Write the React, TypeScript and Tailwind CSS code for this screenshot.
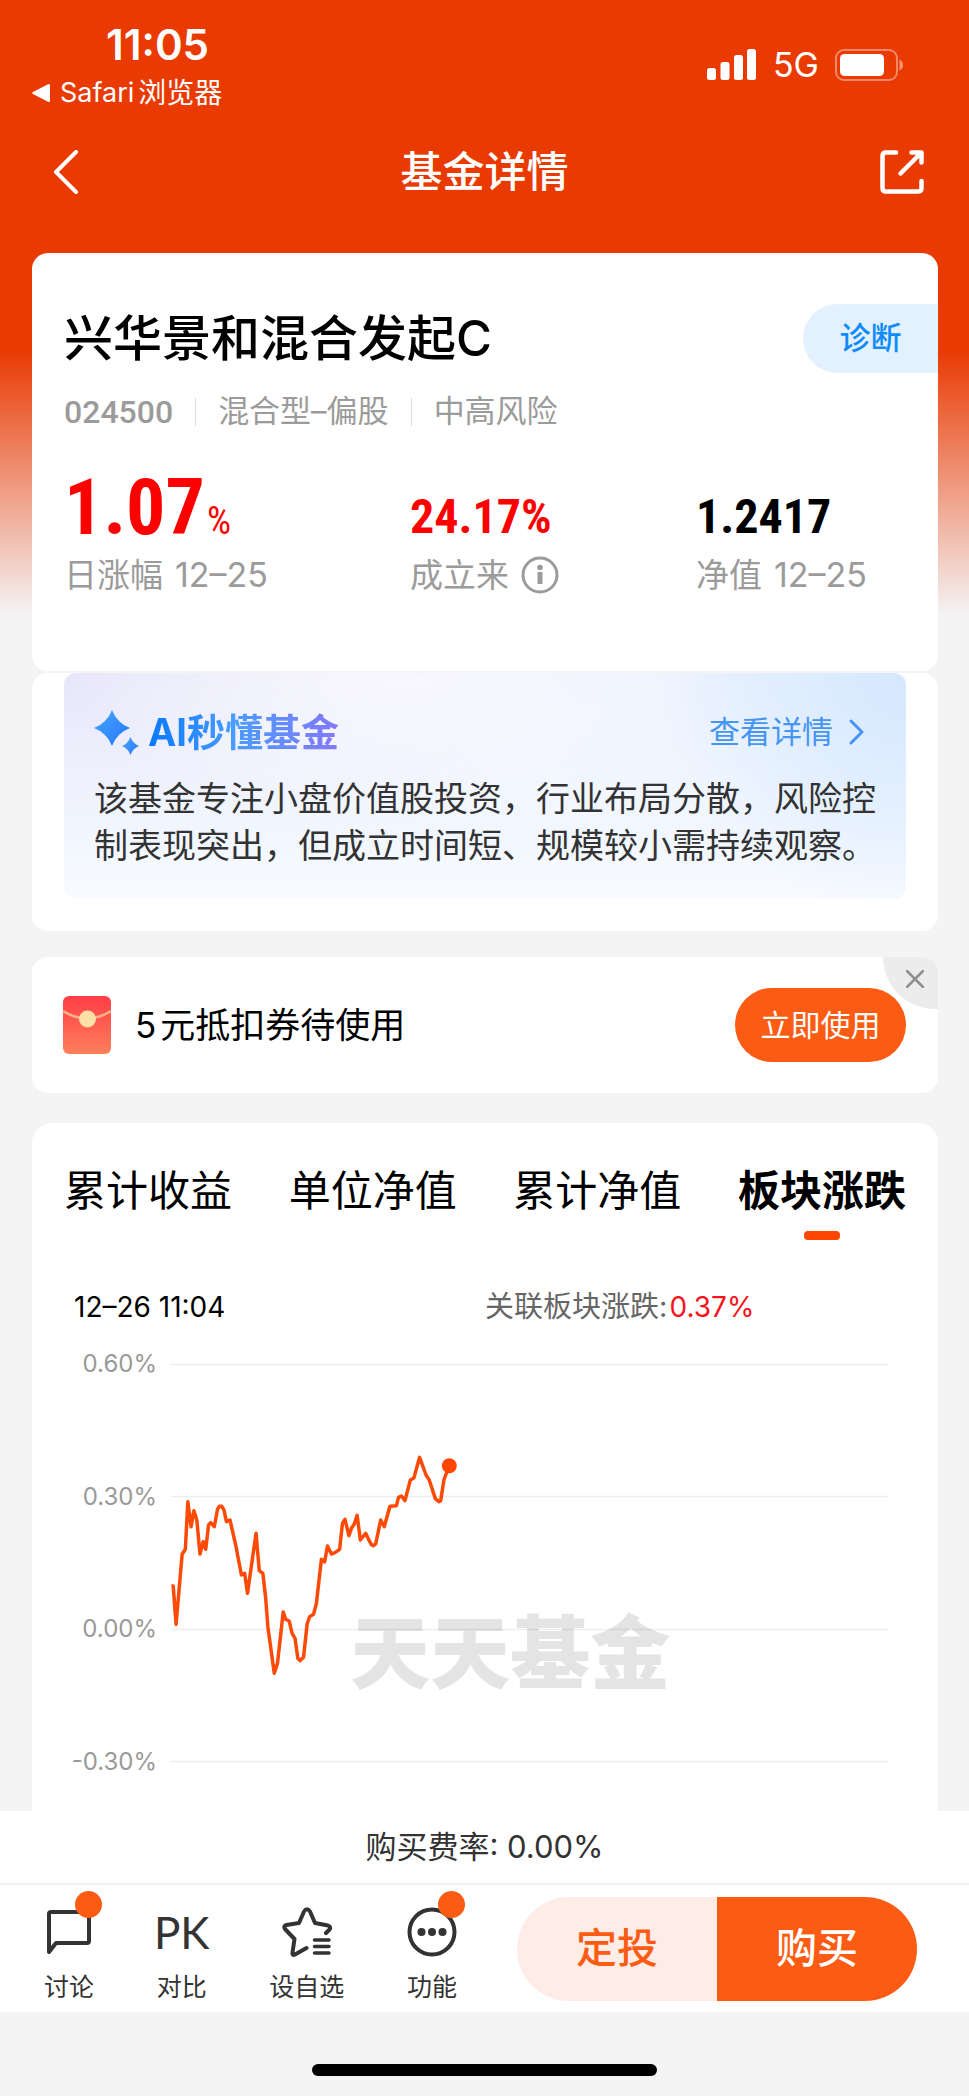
import type { ReactNode } from "react";

const TREND =
  "88,498 93,498 101,613 118,403 127,388 134,245 143,320 151,272 159,300 168,402 177,365 184,388 192,315 198,308 208,320 217,268 222,259 229,259 235,270 242,305 252,300 268,375 284,465 293,460 301,520 325,340 334,452 344,460 352,535 358,620 376,760 385,730 401,576 408,598 418,604 426,640 434,655 442,715 448,722 458,712 468,612 475,590 486,583 494,550 508,418 517,426 525,378 536,402 546,398 559,388 567,310 574,298 585,347 592,325 600,312 608,286 617,360 632,340 640,358 648,374 654,377 660,372 674,300 684,320 700,259 718,257 724,232 732,228 742,242 757,180 767,174 783,112 801,165 810,180 827,236 837,245 842,242 851,180 866,137";

const TABS = ["累计收益", "单位净值", "累计净值", "板块涨跌"];
const AXIS = ["0.60%", "0.30%", "0.00%", "-0.30%"];

function StatusBar() {
  return (
    <div className="flex h-28 items-start justify-between pl-8 pr-[66px] pt-5 text-white">
      <div>
        <div className="pl-[74px] text-[42px] font-semibold leading-[50px]">11:05</div>
        <a href="#safari" className="flex items-center gap-2.5 text-[28px] leading-[46px]">
          <svg width="18" height="20" viewBox="0 0 18 20" fill="currentColor" aria-hidden="true">
            <path d="M16 1.2Q18 .2 18 2.5V17.500Q18 19.800 16 18.800L1 11Q-.6 10 1 9Z" />
          </svg>
          <span className="flex gap-1">
            <span className="text-[27px]">Safari</span>
            <span>浏览器</span>
          </span>
        </a>
      </div>
      <div className="flex h-[90px] items-center gap-4">
        <svg width="50" height="32" viewBox="0 0 50 32" fill="currentColor" aria-hidden="true">
          <rect x="0" y="19" width="9" height="12" rx="2.500" />
          <rect x="13.500" y="13" width="9" height="18" rx="2.500" />
          <rect x="27" y="6" width="9" height="25" rx="2.500" />
          <rect x="40" y="0" width="9" height="31" rx="2.500" />
        </svg>
        <span className="text-[34px] leading-[40px]">5G</span>
        <svg width="68" height="32" viewBox="0 0 68 32" aria-hidden="true">
          <rect x="1" y="1" width="61" height="30" rx="8" fill="none" stroke="#fff" strokeOpacity=".4" strokeWidth="2" />
          <rect x="5" y="5" width="44" height="22" rx="4.500" fill="#fff" />
          <path d="M64.500 10.500Q68 12 68 16Q68 20 64.500 21.500Z" fill="#fff" fillOpacity=".45" />
        </svg>
      </div>
    </div>
  );
}

function NavBar() {
  return (
    <div className="grid h-[141px] grid-cols-[1fr_auto_1fr] items-start px-11 pt-8 text-white">
      <button type="button" aria-label="返回" className="flex h-14 items-center justify-self-start pl-2">
        <svg width="28" height="44" viewBox="0 0 28 44" fill="none" stroke="currentColor" strokeWidth="4" strokeLinecap="round" strokeLinejoin="round">
          <path d="M24 2L4 22L24 42" />
        </svg>
      </button>
      <h1 className="text-[42px] font-medium leading-[56px]">基金详情</h1>
      <button type="button" aria-label="分享" className="flex h-14 items-center justify-self-end">
        <svg width="46" height="46" viewBox="0 0 46 46" fill="none" stroke="currentColor" strokeWidth="4.500" strokeLinecap="round" strokeLinejoin="round">
          <path d="M17 3.500H7Q3.500 3.500 3.500 7V39Q3.500 42.500 7 42.500H39Q42.500 42.500 42.500 39V32M32.500 3.500H42.500V13.500M42 4L21.500 24.500" />
        </svg>
      </button>
    </div>
  );
}

function FundCard() {
  return (
    <section className="rounded-2xl bg-white pb-[73px] pl-8 pt-[50px]">
      <div className="flex items-center justify-between">
        <h2 className="pt-0.5 text-[49px] font-medium leading-[68px] text-black">兴华景和混合发起C</h2>
        <button type="button" className="h-[69px] w-[135px] rounded-l-full bg-[#e3f1ff] text-[31px] font-medium text-[#108cfa]">
          诊断
        </button>
      </div>
      <div className="mt-4 flex h-[45px] items-center gap-[22px] text-[31px] text-[#9b9b9b]">
        <span className="font-[Roboto] text-[32px] font-medium">024500</span>
        <span className="h-7 w-px bg-[#dcdcdc]" />
        <span>混合型–偏股</span>
        <span className="h-7 w-px bg-[#dcdcdc]" />
        <span>中高风险</span>
      </div>
      <dl className="mt-[43px] grid grid-cols-[346fr_286fr_242fr] items-end">
        <div className="flex flex-col-reverse">
          <dt className="flex gap-3 whitespace-nowrap text-[33px] leading-[46px] text-[#9b9b9b]">
            日涨幅 <span className="text-[34px]">12–25</span>
          </dt>
          <dd className="font-['Roboto_Condensed',Roboto] text-[78px] font-bold leading-[62px] text-[#fd0000]">
            1.07<span className="pl-0.5 text-[38px] font-normal">%</span>
          </dd>
        </div>
        <div className="flex flex-col-reverse">
          <dt className="flex items-center gap-3 text-[33px] leading-[46px] text-[#9b9b9b]">
            成立来
            <svg width="38" height="38" viewBox="0 0 38 38" fill="none" stroke="currentColor" aria-hidden="true">
              <circle cx="19" cy="19" r="17" strokeWidth="3" />
              <circle cx="19" cy="11.500" r="2.800" fill="currentColor" stroke="none" />
              <path d="M19 16V28" strokeWidth="5" />
            </svg>
          </dt>
          <dd className="font-['Roboto_Condensed',Roboto] text-[48px] font-bold leading-[70px] text-[#fd0000]">24.17%</dd>
        </div>
        <div className="flex flex-col-reverse">
          <dt className="flex gap-3 whitespace-nowrap text-[33px] leading-[46px] text-[#9b9b9b]">
            净值 <span className="text-[34px]">12–25</span>
          </dt>
          <dd className="font-['Roboto_Condensed',Roboto] text-[48px] font-bold leading-[70px] text-black">1.2417</dd>
        </div>
      </dl>
    </section>
  );
}

function AiCard() {
  return (
    <section className="mt-0.5 rounded-2xl bg-white px-8 pb-8">
      <div className="rounded-xl bg-[radial-gradient(circle_at_100%_0%,#d5e8ff_0%,#d5e8ff00_28%),radial-gradient(ellipse_at_40%_0%,#f8f7fd_0%,#f8f7fd00_45%),linear-gradient(to_bottom,#f4f8ff00_0%,#f2f7ff_75%,#f8fbff_100%),linear-gradient(to_right,#e8e6fa,#f0f5ff_55%,#e8f1fe)] px-[30px] pb-[30px] pt-8">
        <div className="flex h-[54px] items-center justify-between">
          <h3 className="flex items-center gap-2">
            <svg width="46" height="46" viewBox="0 0 46 46" fill="url(#spark)" aria-hidden="true">
              <defs>
                <linearGradient id="spark" x1="0" y1="0" x2="1" y2="1">
                  <stop offset="0" stopColor="#4aa5ff" />
                  <stop offset="1" stopColor="#2378fa" />
                </linearGradient>
              </defs>
              <path d="M18 1Q23 14 36 19Q23 24 18 37Q13 24 0 19Q13 14 18 1Z" />
              <path d="M36.500 28Q39 34.500 45 37Q39 39.500 36.500 46Q34 39.500 28 37Q34 34.500 36.500 28Z" />
            </svg>
            <span className="bg-[linear-gradient(to_right,#0a78ff,#4a9cff_45%,#8478fb)] bg-clip-text text-[38px] font-bold leading-[54px] text-transparent">
              AI秒懂基金
            </span>
          </h3>
          <a href="#ai" className="flex items-center gap-4 pr-3 text-[31px] text-[#4795f2]">
            查看详情
            <svg width="15" height="26" viewBox="0 0 15 26" fill="none" stroke="currentColor" strokeWidth="3" strokeLinecap="round" strokeLinejoin="round" aria-hidden="true">
              <path d="M2 2L13 13L2 24" />
            </svg>
          </a>
        </div>
        <p className="-mr-2 mt-4 text-[34px] leading-[47px] text-[#333]">
          该基金专注小盘价值股投资，行业布局分散，风险控制表现突出，但成立时间短、规模较小需持续观察。
        </p>
      </div>
    </section>
  );
}

function CouponCard() {
  return (
    <section className="relative mt-[26px] flex h-[136px] items-center overflow-hidden rounded-2xl bg-white pl-[31px] pr-8">
      <svg width="48" height="58" viewBox="0 0 48 58" aria-hidden="true">
        <defs>
          <linearGradient id="envelope" x1="0" y1="0" x2="0" y2="1">
            <stop offset="0" stopColor="#ff3e46" />
            <stop offset="1" stopColor="#ff7f5c" />
          </linearGradient>
        </defs>
        <rect width="48" height="58" rx="6" fill="url(#envelope)" />
        <path d="M0 15Q24 30 48 15" fill="none" stroke="#ffb183" strokeWidth="2.500" />
        <circle cx="24.500" cy="23" r="8.500" fill="#ffe0a6" />
      </svg>
      <p className="flex flex-1 gap-1 pl-6 text-[35px] text-black">
        <span>5</span>
        <span>元抵扣券待使用</span>
      </p>
      <button type="button" className="h-[74px] w-[171px] rounded-full bg-[#fc5b13] text-[30px] text-white">
        立即使用
      </button>
      <button type="button" aria-label="关闭" className="absolute right-0 top-0 h-[52px] w-[55px] rounded-bl-full bg-[#ececec]">
        <svg className="ml-[23px] -mt-2" width="18" height="18" viewBox="0 0 18 18" fill="none" stroke="#8f8f8f" strokeWidth="2.500" strokeLinecap="round">
          <path d="M1 1L17 17M17 1L1 17" />
        </svg>
      </button>
    </section>
  );
}

function ChartCard() {
  return (
    <section className="mt-[30px] rounded-t-[20px] bg-white pb-[37px] pt-9">
      <div role="tablist" className="flex justify-between px-8">
        {TABS.map((tab) => {
          const active = tab === "板块涨跌";
          return (
            <button
              key={tab}
              type="button"
              role="tab"
              aria-selected={active}
              className={`flex flex-col items-center text-[42px] leading-[64px] text-black ${active ? "font-bold" : ""}`}
            >
              {tab}
              <span className={`mt-2 h-[9px] w-9 rounded ${active ? "bg-[#fd4602]" : ""}`} />
            </button>
          );
        })}
      </div>
      <div className="mt-11 flex h-[46px] items-center text-[29px]">
        <span className="w-1/2 pl-[42px] text-[28px] text-black">12–26 11:04</span>
        <span className="text-[#666]">
          关联板块涨跌: <span className="-ml-1.5 text-[28px] text-[#f5141e]">0.37%</span>
        </span>
      </div>
      <div className="mt-[22px] flex pl-6 pr-[50px]">
        <div className="flex w-[101px] flex-col justify-between text-right text-[24px] leading-6 text-[#999]">
          {AXIS.map((label) => (
            <span key={label}>{label}</span>
          ))}
        </div>
        <div className="relative my-3 ml-3.5 flex-1">
          <div className="absolute left-[25%] top-[60%] whitespace-nowrap text-[80px] font-black leading-[100px] text-[#e4e4e4]">
            天天基金
          </div>
          <svg className="relative block w-full overflow-visible" viewBox="0 0 717 398" fill="none" role="img" aria-label="板块涨跌走势">
            <path d="M0 .5H717M0 132.500H717M0 265.500H717M0 397.500H717" stroke="#000" strokeOpacity=".07" strokeWidth="1.500" />
            <g transform="translate(-31 56) scale(.3571 .3333)">
              <polyline points={TREND} stroke="#fd4a06" strokeWidth="3.500" strokeLinejoin="round" vectorEffect="non-scaling-stroke" />
            </g>
            <circle cx="278.300" cy="101.700" r="7.500" fill="#fd4602" />
          </svg>
        </div>
      </div>
    </section>
  );
}

function Tool({ label, dot, children }: { label: string; dot?: boolean; children: ReactNode }) {
  return (
    <button type="button" className="flex flex-col items-center">
      <span className="relative flex h-[50px] w-[50px] items-center justify-center">
        {children}
        {dot && <span className="absolute -right-2 -top-4 h-[27px] w-[27px] rounded-full bg-[#fc5b13]" />}
      </span>
      <span className="mt-3.5 text-[25px] leading-8">{label}</span>
    </button>
  );
}

function Footer() {
  return (
    <footer className="text-[#333]">
      <div className="bg-white">
        <p className="border-b-2 border-[#f2f2f2] pb-3 pt-3 text-center text-[31px] leading-[48px]">购买费率: 0.00%</p>
        <div className="flex items-start justify-between pb-[9px] pl-11 pr-[52px] pt-3">
          <div className="flex flex-1 justify-between pr-[60px] pt-2.5">
            <Tool label="讨论" dot>
              <svg width="46" height="46" viewBox="0 0 46 46" fill="none" stroke="currentColor" strokeWidth="4" strokeLinejoin="round">
                <path d="M3 43V5Q3 3 5 3H41Q43 3 43 5V32Q43 34 41 34H10Z" />
              </svg>
            </Tool>
            <Tool label="对比">
              <span className="font-[Lato] text-[44px] leading-[50px]">PK</span>
            </Tool>
            <Tool label="设自选">
              <svg width="50" height="50" viewBox="0 0 50 50" fill="none" stroke="currentColor" strokeWidth="4" strokeLinecap="round" strokeLinejoin="round">
                <path d="M24.500 41L13 47.500Q10 49 10.500 45.500L12.500 32L3 22Q1 19 4.500 18L17 16L22 4.500Q25 0 28 4.500L33 16L46 18.500Q49.500 20 47.500 22.500L44 26" />
                <path d="M32.500 33H47M32.500 39.500H47M32.500 46H47" strokeWidth="3.500" />
              </svg>
            </Tool>
            <Tool label="功能" dot>
              <svg width="50" height="50" viewBox="0 0 50 50" fill="none" stroke="currentColor" strokeWidth="4">
                <circle cx="25" cy="25" r="22.500" />
                <g fill="currentColor" stroke="none">
                  <circle cx="14.500" cy="25" r="4" />
                  <circle cx="25" cy="25" r="4" />
                  <circle cx="35.500" cy="25" r="4" />
                </g>
              </svg>
            </Tool>
          </div>
          <div className="flex h-[104px] w-[400px] overflow-hidden rounded-full text-[41px] font-medium">
            <button type="button" className="flex-1 bg-[#fdede6] text-[#fc5b13]">定投</button>
            <button type="button" className="flex-1 bg-[#fc5b13] text-white">购买</button>
          </div>
        </div>
      </div>
      <div className="flex justify-center pb-[21px] pt-[52px]">
        <div className="h-3 w-[345px] rounded-full bg-black" />
      </div>
    </footer>
  );
}

export default function App() {
  return (
    <div className="min-h-screen bg-[#f4f4f4] bg-[linear-gradient(to_bottom,#e93a02_0px,#e93a02_350px,#f4f4f4_615px)] font-[Inter,'Noto_Sans_CJK_SC',sans-serif]">
      <StatusBar />
      <NavBar />
      <main className="pl-8 pr-[31px]">
        <FundCard />
        <AiCard />
        <CouponCard />
        <ChartCard />
      </main>
      <Footer />
    </div>
  );
}
